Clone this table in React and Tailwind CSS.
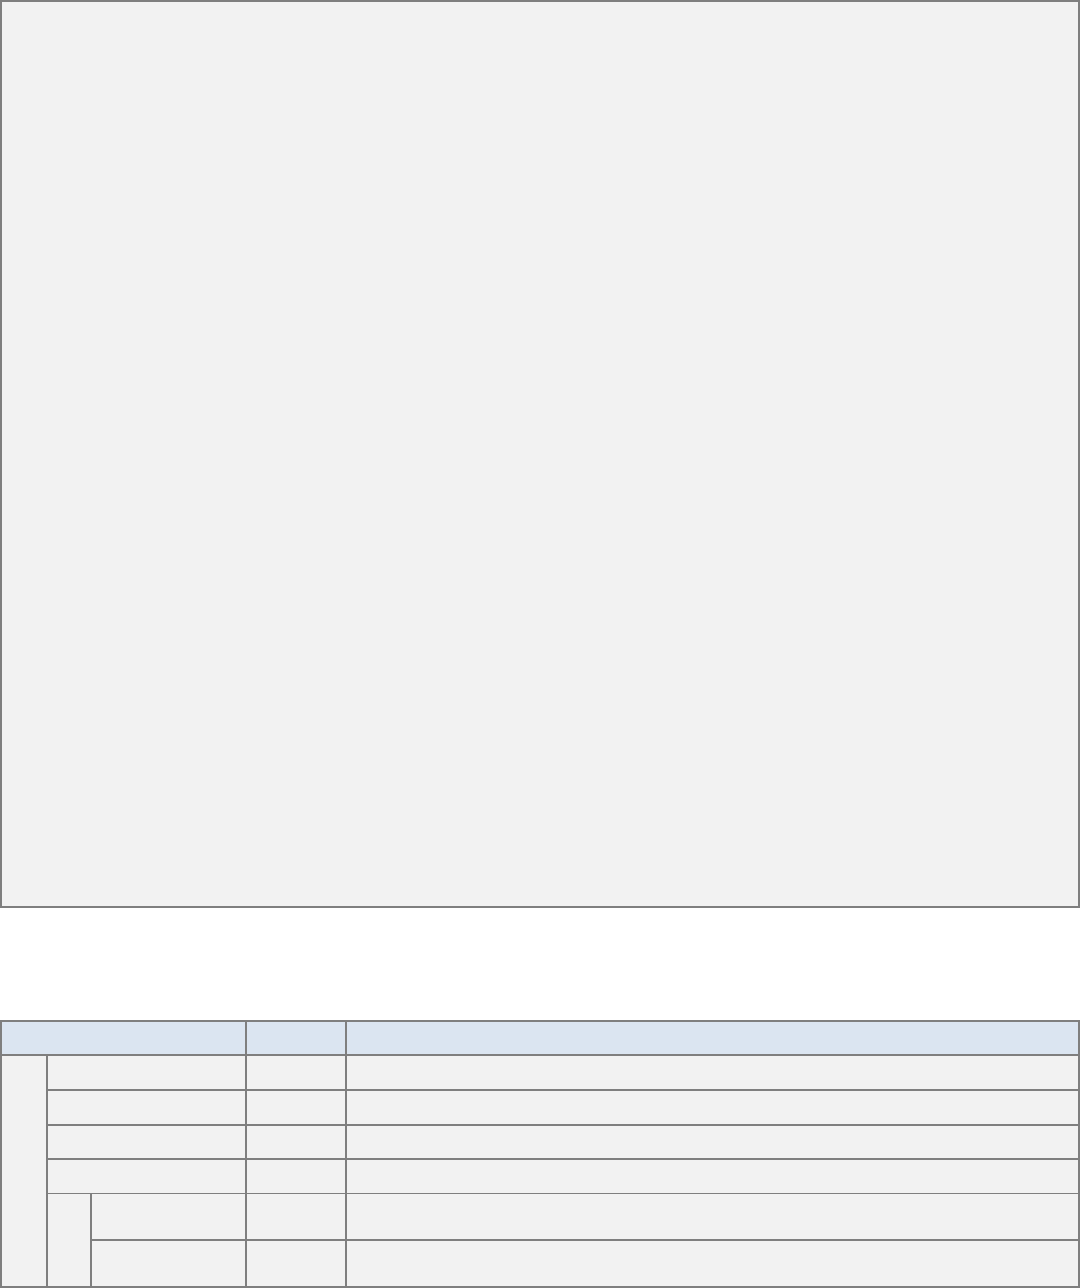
import React from "react";

const cell = "bg-[#f2f2f2] border-r-2 border-b-2 border-[#7f7f7f]";
const head = "bg-[#dbe5f1] border-r-2 border-b-2 border-[#7f7f7f]";

export default function App() {
  const rows = [2, 3, 4, 5];

  return (
    <div className="w-[1080px] min-h-[1288px] bg-white font-['Liberation_Sans',sans-serif] text-sm text-black">
      {/* preview area */}
      <div className="h-[908px] w-full border-2 border-[#7f7f7f] bg-[#f2f2f2]" />

      {/* parameter table */}
      <div className="mt-[112px] grid grid-cols-[46px_44px_155px_100px_733px] grid-rows-[34px_35px_35px_34px_34px_47px_47px] border-l-2 border-t-2 border-[#7f7f7f]">
        <div className={`${head} col-start-1 col-span-3 row-start-1`} />
        <div className={`${head} col-start-4 row-start-1`} />
        <div className={`${head} col-start-5 row-start-1`} />

        <div className={`${cell} col-start-1 row-start-2 row-span-6`} />

        {rows.map((r) => {
          const last = r === 5;
          const b = last ? "border-b" : "border-b-2";
          const rs = { 2: "row-start-2", 3: "row-start-3", 4: "row-start-4", 5: "row-start-5" }[r];
          return (
            <React.Fragment key={r}>
              <div className={`bg-[#f2f2f2] border-r-2 ${b} border-[#7f7f7f] col-start-2 col-span-2 ${rs}`} />
              <div className={`bg-[#f2f2f2] border-r-2 ${b} border-[#7f7f7f] col-start-4 ${rs}`} />
              <div className={`bg-[#f2f2f2] border-r-2 ${b} border-[#7f7f7f] col-start-5 ${rs}`} />
            </React.Fragment>
          );
        })}

        <div className={`${cell} col-start-2 row-start-6 row-span-2`} />
        <div className={`${cell} col-start-3 row-start-6`} />
        <div className={`${cell} col-start-4 row-start-6`} />
        <div className={`${cell} col-start-5 row-start-6`} />
        <div className={`${cell} col-start-3 row-start-7`} />
        <div className={`${cell} col-start-4 row-start-7`} />
        <div className={`${cell} col-start-5 row-start-7`} />
      </div>
    </div>
  );
}
